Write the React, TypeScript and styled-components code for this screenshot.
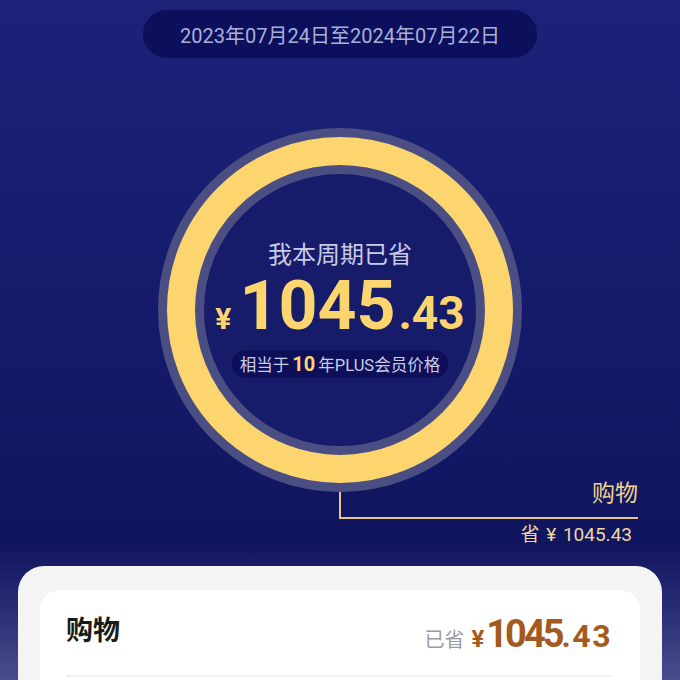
import React from 'react'
import styled, { createGlobalStyle } from 'styled-components'

const GlobalStyle = createGlobalStyle`
  html, body {
    margin: 0;
    padding: 0;
    background: #131966;
  }
  body {
    font-family: Roboto, "Noto Sans CJK SC", sans-serif;
  }
`

const Page = styled.div`
  position: relative;
  width: 680px;
  height: 680px;
  overflow: hidden;
  display: flex;
  flex-direction: column;
  align-items: flex-start;
  background: linear-gradient(
    180deg,
    #1c2278 0%,
    #161c6c 40%,
    #10155f 80%,
    #2a2e74 90%,
    #4a4d8c 100%
  );
`

const DatePill = styled.div`
  margin: 10px 0 0 143px;
  width: 394px;
  height: 48px;
  border-radius: 24px;
  background: #0c0f5c;
  color: #aab0d8;
  font-size: 20px;
  display: flex;
  align-items: center;
  justify-content: center;
`

const Ring = styled.div`
  position: relative;
  z-index: 1;
  margin: 70px 0 0 158px;
  width: 364px;
  height: 364px;
  box-sizing: border-box;
  border-radius: 50%;
  border: 9px solid #4a4e82;
  background: #fdd56e;
  padding: 28px;
`

const RingInner = styled.div`
  width: 100%;
  height: 100%;
  box-sizing: border-box;
  border-radius: 50%;
  border: 9px solid #4a4e82;
  background: #161b6a;
  display: flex;
  flex-direction: column;
  align-items: center;
  padding-top: 66px;
`

const Caption = styled.div`
  color: #c9cbe8;
  font-size: 24px;
  line-height: 30px;
`

const BigAmount = styled.div`
  color: #fdd56e;
  font-weight: 700;
  font-size: 68px;
  line-height: 72px;
  white-space: nowrap;
`

const AmountPart = styled.span<{ size: number; gap?: number }>`
  font-size: ${({ size }) => size}px;
  line-height: 1;
  margin-right: ${({ gap }) => gap ?? 0}px;
`

const EquivPill = styled.div`
  margin-top: 8px;
  height: 28px;
  padding: 0 8px;
  border-radius: 14px;
  background: #0d1058;
  color: #c9cbe8;
  font-size: 16.5px;
  display: flex;
  align-items: center;
  white-space: nowrap;
`

const EquivNum = styled.b`
  color: #fdd56e;
  font-size: 20px;
  margin: 0 3px;
`

const Leader = styled.div`
  margin: -12px 0 0 339px;
  width: 299px;
  display: flex;
  flex-direction: column;
`

const LeaderBox = styled.div`
  height: 39px;
  box-sizing: border-box;
  border-left: 2px solid #e6c685;
  border-bottom: 2px solid #e6c685;
  display: flex;
  justify-content: flex-end;
  align-items: flex-start;
`

const LeaderLabel = styled.div`
  color: #f1d38c;
  font-size: 23px;
  line-height: 28px;
`

const LeaderValue = styled.div`
  align-self: flex-end;
  margin: 4px 6px 0 0;
  color: #efd7a0;
  font-size: 19px;
  line-height: 24px;
  word-spacing: 2px;
`

const Card = styled.div`
  margin: 19px 0 0 18px;
  width: 644px;
  flex: 1;
  box-sizing: border-box;
  background: #f4f4f4;
  border-radius: 26px 26px 0 0;
  padding: 24px 22px 0;
`

const CardInner = styled.div`
  background: #fff;
  border-radius: 20px 20px 0 0;
  height: 100%;
  padding: 0 28px 0 26px;
`

const CardRow = styled.div`
  height: 87px;
  box-sizing: border-box;
  border-bottom: 2px solid #f0f0f0;
  display: flex;
  align-items: center;
  justify-content: space-between;
  padding-bottom: 2px;
`

const CardTitle = styled.div`
  color: #1a1a1a;
  font-size: 27px;
  font-weight: 700;
  line-height: 1;
`

const Saved = styled.div`
  display: flex;
  align-items: baseline;
  color: #a45a1c;
  font-weight: 700;
  padding-top: 4px;
`

const SavedLabel = styled.span`
  color: #9a9aa2;
  font-size: 20px;
  font-weight: 400;
  line-height: 1;
  margin-right: 7px;
`

const SavedNum = styled.span<{ size: number; spacing: number; gap?: number }>`
  font-size: ${({ size }) => size}px;
  letter-spacing: ${({ spacing }) => spacing}px;
  line-height: 1;
  margin-right: ${({ gap }) => gap ?? 0}px;
`

export default function App() {
  return (
    <>
      <GlobalStyle />
      <Page>
        <DatePill>2023年07月24日至2024年07月22日</DatePill>
        <Ring>
          <RingInner>
            <Caption>我本周期已省</Caption>
            <BigAmount>
              <AmountPart size={30} gap={8}>¥</AmountPart>
              <AmountPart size={68} gap={3}>1045</AmountPart>
              <AmountPart size={46}>.43</AmountPart>
            </BigAmount>
            <EquivPill>
              相当于<EquivNum>10</EquivNum>年PLUS会员价格
            </EquivPill>
          </RingInner>
        </Ring>
        <Leader>
          <LeaderBox>
            <LeaderLabel>购物</LeaderLabel>
          </LeaderBox>
          <LeaderValue>省 ¥ 1045.43</LeaderValue>
        </Leader>
        <Card>
          <CardInner>
            <CardRow>
              <CardTitle>购物</CardTitle>
              <Saved>
                <SavedLabel>已省</SavedLabel>
                <SavedNum size={24} spacing={0} gap={2}>¥</SavedNum>
                <SavedNum size={38} spacing={-3}>1045</SavedNum>
                <SavedNum size={32} spacing={1.5}>.43</SavedNum>
              </Saved>
            </CardRow>
          </CardInner>
        </Card>
      </Page>
    </>
  )
}
